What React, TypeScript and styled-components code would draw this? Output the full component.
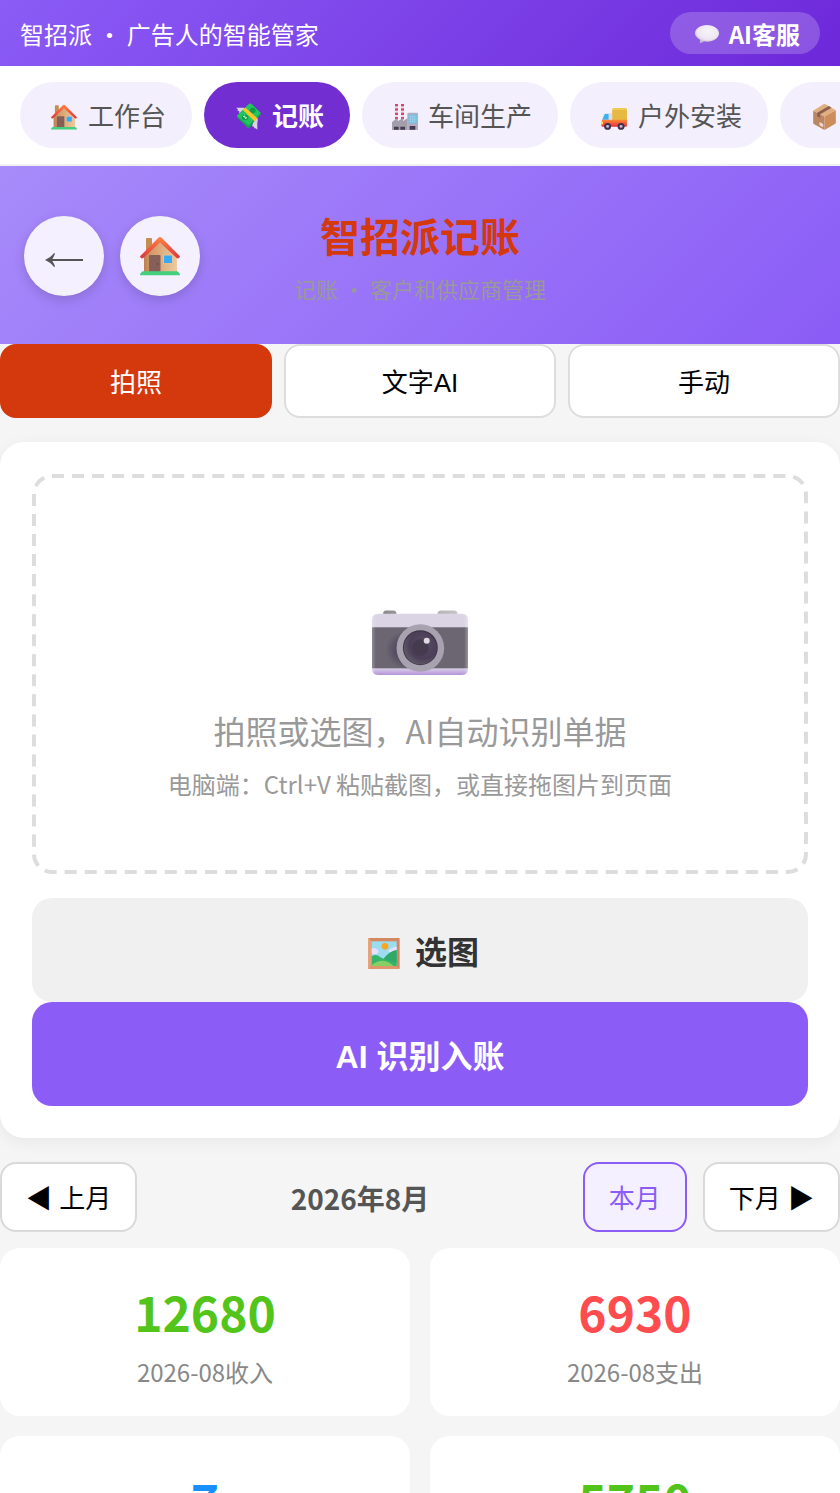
import React, { useState } from 'react';
import styled, { createGlobalStyle, css } from 'styled-components';

const GlobalStyle = createGlobalStyle`
  * { box-sizing: border-box; }
  body {
    margin: 0;
    background: #f5f5f5;
    color: #333;
    font-family: "Noto Sans CJK SC", sans-serif;
    overflow-x: hidden;
  }
  button {
    font-family: "Liberation Sans", "Noto Sans CJK SC", sans-serif;
    cursor: pointer;
  }
  svg { display: block; }
`;

const TopBar = styled.header`
  display: flex;
  align-items: center;
  justify-content: space-between;
  padding: 12px 20px;
  color: #fff;
  background: linear-gradient(135deg, #8b5cf6, #6d28d9);
  font-size: 24px;
`;

const Brand = styled.div`
  padding-top: 2px;
  line-height: 40px;
`;

const ServiceButton = styled.button`
  display: flex;
  align-items: center;
  gap: 9px;
  padding: 2px 20px 0 24px;
  border: 0;
  border-radius: 24px;
  color: #fff;
  background: rgba(255, 255, 255, 0.2);
  font-family: "Noto Sans CJK SC", sans-serif;
  font-size: 24px;
  font-weight: 700;
  line-height: 40px;
`;

const Nav = styled.nav`
  display: flex;
  gap: 12px;
  padding: 16px 20px;
  overflow: hidden;
  background: #fff;
  border-bottom: 2px solid #f0f0f0;
`;

const NavLink = styled.a<{ $active?: boolean }>`
  display: flex;
  flex: none;
  align-items: center;
  gap: 10px;
  padding: 0 26px 0 30px;
  border-radius: 36px;
  color: ${p => (p.$active ? '#fff' : '#555')};
  background: ${p => (p.$active ? '#722ed1' : '#f3effc')};
  font-size: 26px;
  font-weight: ${p => (p.$active ? 700 : 400)};
  line-height: 66px;
  text-decoration: none;
  white-space: nowrap;
`;

const IconSlot = styled.span<{ $width: number }>`
  display: grid;
  place-items: center;
  width: ${p => p.$width}px;
`;

const NavIconSlot = styled(IconSlot)`
  place-items: end center;
  height: 30px;
`;

const Hero = styled.section`
  display: grid;
  grid-template-columns: 1fr auto 1fr;
  align-items: center;
  padding: 40px 24px 38px;
  background: linear-gradient(135deg, #a78bfa, #8b5cf6);
  text-align: center;
`;

const HeroActions = styled.div`
  display: flex;
  gap: 16px;
`;

const RoundButton = styled.button`
  display: grid;
  place-items: center;
  width: 80px;
  height: 80px;
  padding: 0;
  border: 0;
  border-radius: 50%;
  color: #555;
  background: #f5f0ff;
  box-shadow: 0 4px 12px rgba(0, 0, 0, 0.15);
`;

const Title = styled.h1`
  margin: 0;
  color: #d4380d;
  font-size: 40px;
  line-height: 58px;
`;

const Subtitle = styled.p`
  margin: 6px 0 0;
  color: #999;
  font-size: 22px;
  line-height: 36px;
`;

const Tabs = styled.div`
  display: grid;
  grid-template-columns: repeat(3, 1fr);
  gap: 12px;
`;

const Tab = styled.button<{ $active: boolean }>`
  padding: 4px 0 0;
  border: 2px solid ${p => (p.$active ? '#d4380d' : '#ddd')};
  border-radius: 16px;
  color: ${p => (p.$active ? '#fff' : '#000')};
  background: ${p => (p.$active ? '#d4380d' : '#fff')};
  font-size: 26px;
  line-height: 66px;
`;

const Card = styled.section`
  margin: 24px 0;
  padding: 32px;
  border-radius: 24px;
  background: #fff;
  box-shadow: 0 4px 16px rgba(0, 0, 0, 0.06);
`;

const DropZone = styled.div`
  position: relative;
  display: flex;
  flex-direction: column;
  align-items: center;
  justify-content: center;
  min-height: 400px;
  margin-bottom: 24px;
  color: #999;
  text-align: center;
`;

const DashedOutline = styled.svg`
  position: absolute;
  inset: 0;
  width: 100%;
  height: 100%;
  pointer-events: none;

  rect {
    width: calc(100% - 4px);
    height: calc(100% - 4px);
    fill: none;
    stroke: #ddd;
    stroke-width: 4px;
    stroke-dasharray: 12 8;
  }
`;

const CameraHolder = styled.div`
  padding: 64px 0 31px;
`;

const DropTitle = styled.p`
  margin: 0;
  font-size: 32px;
  line-height: 48px;
`;

const DropHint = styled.p`
  margin: 12px 0 0;
  font-size: 24px;
  line-height: 36px;
`;

const ActionButton = styled.button<{ $primary?: boolean }>`
  display: flex;
  align-items: center;
  justify-content: center;
  gap: 8px;
  width: 100%;
  padding: 6px 0 0;
  border: 0;
  border-radius: 20px;
  font-size: 32px;
  font-weight: 700;
  line-height: 98px;
  ${p => p.$primary
    ? css`color: #fff; background: #8b5cf6;`
    : css`color: #333; background: #f0f0f0;`}
`;

const MonthBar = styled.div`
  display: flex;
  align-items: center;
  gap: 16px;
  margin-bottom: 16px;
`;

const MonthLabel = styled.div`
  flex: 1;
  padding-top: 2px;
  color: #555;
  font-size: 28px;
  font-weight: 700;
  text-align: center;
`;

const MonthButton = styled.button<{ $current?: boolean }>`
  padding: 4px 24px 0;
  border: 2px solid ${p => (p.$current ? '#8b5cf6' : '#d9d9d9')};
  border-radius: 16px;
  color: ${p => (p.$current ? '#8b5cf6' : '#000')};
  background: ${p => (p.$current ? '#f5f0ff' : '#fff')};
  font-size: 26px;
  line-height: 62px;
  white-space: nowrap;
`;

const Stats = styled.div`
  display: grid;
  grid-template-columns: 1fr 1fr;
  gap: 20px;
`;

const Stat = styled.div`
  padding: 28px 20px 26px;
  border-radius: 20px;
  background: #fff;
  text-align: center;
`;

const StatValue = styled.div<{ $color: string }>`
  color: ${p => p.$color};
  font-size: 48px;
  font-weight: 700;
  line-height: 70px;
`;

const StatLabel = styled.div`
  margin-top: 8px;
  color: #888;
  font-size: 24px;
  line-height: 36px;
`;

function BackIcon() {
  return (
    <svg width="38" height="22" viewBox="0 0 38 22" aria-hidden="true">
      <path d="M0 15q6-2.500 9-7l1 .6q-1 3-2.700 5.400H38v2H7.300q1.700 2.400 2.700 5.400l-1 .6q-3-4.500-9-7Z" fill="currentColor" />
    </svg>
  );
}

function HouseIcon({ size, id }: { size: number; id: string }) {
  return (
    <svg width={size} height={size} viewBox="0 0 40 40" aria-hidden="true">
      <defs>
        <linearGradient id={`${id}-wall`} x1="0" x2="1">
          <stop offset="0" stopColor="#b98250" />
          <stop offset="0.25" stopColor="#d69c6c" />
          <stop offset="1" stopColor="#ebcb9f" />
        </linearGradient>
        <linearGradient id={`${id}-roof`} x1="0" y1="0" x2="0" y2="1">
          <stop offset="0" stopColor="#ff8442" />
          <stop offset="1" stopColor="#dd3540" />
        </linearGradient>
      </defs>
      <rect x="6" y="2" width="6" height="18" rx="1" fill="#c38e50" />
      <path d="M4 20 20 4l17 16v17H4Z" fill={`url(#${id}-wall)`} />
      <path d="M0 20.3 18.6 1.6Q20 .4 21.4 1.6L40 20.3q-.6 3-3.3 1.7L20 6.600 3.300 22Q.6 23.300 0 20.300Z" fill={`url(#${id}-roof)`} />
      <rect x="9" y="19" width="11.500" height="17" rx="1" fill="#865f58" />
      <circle cx="17.500" cy="28" r=".8" fill="#5e413d" />
      <rect x="23" y="18.500" width="9.500" height="9" rx=".8" fill="#f0c08f" />
      <rect x="24" y="19.500" width="8" height="7.500" fill="#36a9fb" />
      <path d="M1.500 36.200q.5-1 2-1h33q1.500 0 2 1 1.500.8 1.500 3H0q0-2.200 1.500-3Z" fill="#43cf7c" />
    </svg>
  );
}

function MoneyIcon() {
  return (
    <svg width="25" height="27" viewBox="0 0 75 80" aria-hidden="true">
      <path d="M0 14h24l8 12-16 10q-2-6-7-8l1-4-6-2 2-4Z" fill="#d9d4e2" />
      <path d="M4 38 39 3q4-3 8 0l27 27q1 4-2 7L41 73q-4 3-7 0L4 44q-2-3 0-6Z" fill="#16a34f" />
      <path d="M4 36 39 2q4-2 8 1l27 26-36 38L4 40Z" fill="#22c464" />
      <ellipse cx="50" cy="22" rx="9" ry="8" fill="#0f9b47" />
      <path d="m20 20 8-7 37 33v10l-6 2Z" fill="#fcc526" />
      <ellipse cx="27" cy="43" rx="10" ry="8" fill="#0fa04a" />
      <path d="m21 41 5-3 2 8 5-3" fill="none" stroke="#e6ffe9" strokeWidth="3" />
      <path d="M52 58 64 46v34l-5-5-3 1-3-6-5-1Z" fill="#d9d4e2" />
    </svg>
  );
}

function FactoryIcon() {
  return (
    <svg width="26" height="26" viewBox="0 0 78 78" aria-hidden="true">
      {[9, 27].map(x => (
        <g key={x}>
          <rect x={x} width="9" height="52" fill="#e9dde8" />
          {[0, 13, 26, 39].map(y => (
            <rect key={y} x={x} y={y} width="9" height="7" fill="#de4367" />
          ))}
        </g>
      ))}
      <path d="M0 54 17 42v10l16-10v10l14-10v36H0Z" fill="#a39eab" />
      <path d="M46 29q0-3 3-3h26q3 0 3 3v49H46Z" fill="#b3aec0" />
      <rect x="50" y="32" width="24" height="26" fill="#55c3f1" />
      <path d="M56 32v26M62 32v26M68 32v26M50 38h24M50 45h24M50 52h24" stroke="#c7d8e8" strokeWidth="1.500" />
      <path d="M6 68h14v9H6ZM25 68h14v9H25ZM53 66h17v11H53Z" fill="#463c51" />
    </svg>
  );
}

function TruckIcon() {
  return (
    <svg width="26" height="22" viewBox="0 0 79 67" aria-hidden="true">
      <defs>
        <linearGradient id="truck-base" x1="0" y1="0" x2="0" y2="1">
          <stop offset="0" stopColor="#ff8a34" />
          <stop offset="1" stopColor="#e52b3e" />
        </linearGradient>
      </defs>
      <path d="m2 38 7-19q2-4 6-4h20v24Z" fill="#e4dbe9" />
      <path d="m4 36 6-15q1-3 4-3h9v18Z" fill="#35b4f4" />
      <rect x="34" width="45" height="42" rx="6" fill="#e5b942" />
      <path d="M35 6q0-4 4-5h33q6 0 6 4Z" fill="#f2cf55" />
      <path d="M2 40q0-4 4-4h73v17q0 4-4 4H5q-4 0-4-4Z" fill="url(#truck-base)" />
      <rect x="1" y="41" width="5" height="9" rx="2" fill="#ffe45c" />
      {[20, 61].map(x => (
        <g key={x}>
          <circle cx={x} cy="56" r="10.500" fill="#42304f" />
          <circle cx={x} cy="56" r="4.500" fill="#c9bfd5" />
        </g>
      ))}
    </svg>
  );
}

function BoxIcon() {
  return (
    <svg width="23" height="26" viewBox="0 0 68 78" aria-hidden="true">
      <path d="M0 20 34 37v41L3 61q-3-2-3-5Z" fill="#bd8663" />
      <path d="M68 19 34 37v41l31-18q3-2 3-5Z" fill="#cd8d5a" />
      <path d="M0 20 31 1q3-2 6 0l31 18-34 19Z" fill="#dfaf82" />
      <path d="m12 26 35-20 8 5-34 20v11l-9-5Z" fill="#8c5e4e" />
      <path d="m19 54 11 6v10l-11-6Z" fill="#f0d8d6" />
    </svg>
  );
}

function BubbleIcon() {
  return (
    <svg width="24" height="18" viewBox="0 0 72 54" aria-hidden="true">
      <defs>
        <radialGradient id="bubble" cx="0.550" cy="0.350" r="0.650">
          <stop offset="0" stopColor="#f8f4fb" />
          <stop offset="0.700" stopColor="#ece6f1" />
          <stop offset="1" stopColor="#bdb2cc" />
        </radialGradient>
      </defs>
      <path d="M36 0c20 0 36 11 36 25S56 50 36 50q-5 0-9-1-5 5-12 5-2 0-1-2 2-4 1-8C6 39 0 33 0 25 0 11 16 0 36 0Z" fill="url(#bubble)" />
    </svg>
  );
}

function CameraIcon() {
  return (
    <svg width="96" height="65" viewBox="0 0 286 193" aria-hidden="true">
      <defs>
        <linearGradient id="cam-button" x1="0" x2="1">
          <stop offset="0" stopColor="#8c8a8c" />
          <stop offset="1" stopColor="#c6c4c6" />
        </linearGradient>
        <linearGradient id="cam-base" x1="0" y1="0" x2="0" y2="1">
          <stop offset="0" stopColor="#d8cde8" />
          <stop offset="1" stopColor="#b495d8" />
        </linearGradient>
        <radialGradient id="cam-shade">
          <stop offset="0.500" stopColor="#4d3f5c" stopOpacity="0.800" />
          <stop offset="1" stopColor="#4d3f5c" stopOpacity="0" />
        </radialGradient>
        <radialGradient id="cam-lens" cx="0.600" cy="0.400" r="0.600">
          <stop offset="0" stopColor="#5a5063" />
          <stop offset="0.700" stopColor="#4b3e59" />
          <stop offset="1" stopColor="#5d5664" />
        </radialGradient>
        <linearGradient id="cam-edge" x1="0" x2="1">
          <stop offset="0" stopColor="#fff" stopOpacity="0.250" />
          <stop offset="0.040" stopColor="#fff" stopOpacity="0" />
          <stop offset="0.960" stopColor="#fff" stopOpacity="0" />
          <stop offset="1" stopColor="#fff" stopOpacity="0.300" />
        </linearGradient>
      </defs>
      <path d="M33 12q0-11 9-11h22q9 0 9 11ZM195 12q0-11 11-11h38q11 0 11 11Z" fill="url(#cam-button)" />
      <path d="M0 52V30q0-19 19-19h248q19 0 19 19v22Z" fill="#dad4e5" />
      <path d="M0 51h286v124H0Z" fill="#6b6671" />
      <path d="M0 174h286q0 19-17 19H17Q0 193 0 174Z" fill="url(#cam-base)" />
      <ellipse cx="112" cy="118" rx="72" ry="60" fill="url(#cam-shade)" />
      <path d="M0 30q0-19 19-19h248q19 0 19 19v145q0 18-17 18H17Q0 193 0 175Z" fill="url(#cam-edge)" />
      <circle cx="144" cy="113" r="71" fill="#a7a1b0" />
      <circle cx="144" cy="112" r="52" fill="#3e3448" />
      <circle cx="144" cy="113" r="49" fill="url(#cam-lens)" />
      <circle cx="144" cy="112" r="25" fill="#453b4f" />
      <circle cx="163" cy="91" r="9" fill="#dedbe0" />
    </svg>
  );
}

function PictureIcon() {
  return (
    <svg width="32" height="31" viewBox="0 0 94 93" aria-hidden="true">
      <rect width="94" height="93" rx="2" fill="#d38860" />
      <path d="M0 0 10 10v73L0 93Z" fill="#e9a275" />
      <path d="M0 93 10 83h74l10 10Z" fill="#e0966c" />
      <rect x="10" y="10" width="75" height="74" fill="#9bdcf1" />
      <path d="M10 32q9-5 14 1 8 1 6 11-8 8-20 3ZM85 26q-9-2-13 5-10 1-12 9l11 8 14-5Z" fill="#e6e0fb" />
      <circle cx="50" cy="25" r="10" fill="#f5a623" />
      <path d="M10 55q14-10 26 3l10 4q18-23 39-26v48H10Z" fill="#35b56a" />
      <path d="M46 62q18-23 39-26v38Z" fill="#2fa868" />
      <path d="M10 82q32-28 66 2H10Z" fill="#86cf62" />
    </svg>
  );
}

const sections = [
  { name: '工作台', icon: <HouseIcon size={26} id="nav-house" />, width: 28 },
  { name: '记账', icon: <MoneyIcon />, width: 28 },
  { name: '车间生产', icon: <FactoryIcon />, width: 26 },
  { name: '户外安装', icon: <TruckIcon />, width: 28 },
  { name: '仓库', icon: <BoxIcon />, width: 28 },
];
const modes = ['拍照', '文字AI', '手动'];
const stats = [
  { value: '12680', label: '2026-08收入', color: '#52c41a' },
  { value: '6930', label: '2026-08支出', color: '#ff4d4f' },
  { value: '7', label: '单据数', color: '#1890ff' },
  { value: '5750', label: '利润', color: '#52c41a' },
];

export default function App() {
  const [mode, setMode] = useState(0);
  return (
    <>
      <GlobalStyle />
      <TopBar>
        <Brand>智招派 · 广告人的智能管家</Brand>
        <ServiceButton>
          <IconSlot $width={26}><BubbleIcon /></IconSlot>
          AI客服
        </ServiceButton>
      </TopBar>
      <Nav>
        {sections.map((s, i) => (
          <NavLink key={s.name} href="#" $active={i === 1}>
            <NavIconSlot $width={s.width}>{s.icon}</NavIconSlot>
            {s.name}
          </NavLink>
        ))}
      </Nav>
      <Hero>
        <HeroActions>
          <RoundButton aria-label="返回"><BackIcon /></RoundButton>
          <RoundButton aria-label="首页"><HouseIcon size={40} id="hero-house" /></RoundButton>
        </HeroActions>
        <div>
          <Title>智招派记账</Title>
          <Subtitle>记账 · 客户和供应商管理</Subtitle>
        </div>
      </Hero>
      <Tabs>
        {modes.map((name, i) => (
          <Tab key={name} $active={i === mode} onClick={() => setMode(i)}>{name}</Tab>
        ))}
      </Tabs>
      <Card>
        <DropZone>
          <DashedOutline aria-hidden="true">
            <rect x="2" y="2" rx="18" pathLength={2300} />
          </DashedOutline>
          <CameraHolder><CameraIcon /></CameraHolder>
          <DropTitle>拍照或选图，AI自动识别单据</DropTitle>
          <DropHint>电脑端：Ctrl+V 粘贴截图，或直接拖图片到页面</DropHint>
        </DropZone>
        <ActionButton>
          <IconSlot $width={46}><PictureIcon /></IconSlot>
          选图
        </ActionButton>
        <ActionButton $primary>AI 识别入账</ActionButton>
      </Card>
      <MonthBar>
        <MonthButton>◀ 上月</MonthButton>
        <MonthLabel>2026年8月</MonthLabel>
        <MonthButton $current>本月</MonthButton>
        <MonthButton>下月 ▶</MonthButton>
      </MonthBar>
      <Stats>
        {stats.map(s => (
          <Stat key={s.label}>
            <StatValue $color={s.color}>{s.value}</StatValue>
            <StatLabel>{s.label}</StatLabel>
          </Stat>
        ))}
      </Stats>
    </>
  );
}
